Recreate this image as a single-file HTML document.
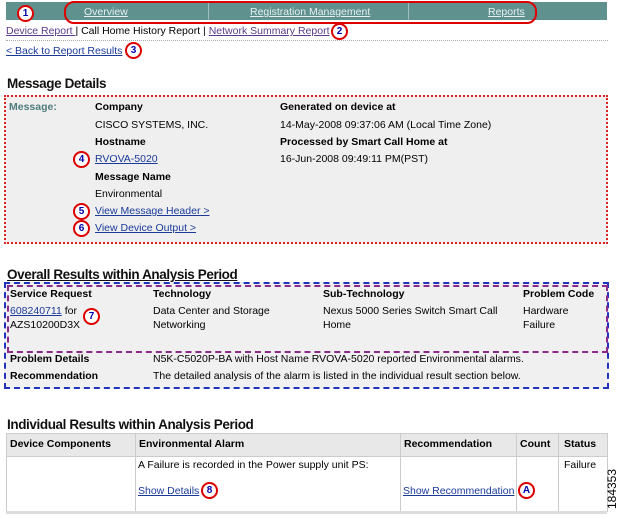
<!DOCTYPE html>
<html><head><style>
body{margin:0;width:625px;height:519px;background:#fff;font-family:"Liberation Sans",sans-serif;font-size:10.5px;color:#000;position:relative;overflow:hidden}
.a{position:absolute;white-space:nowrap}
a,.l{color:#1a3a9a;text-decoration:underline}
.v{color:#5a3a8a}
.b{font-weight:bold}
.c{position:absolute;width:13px;height:13px;border:2px solid #d00;border-radius:50%;color:#00a;font-size:10px;font-weight:bold;text-align:center;line-height:13px;background:#fff}
h2{position:absolute;margin:0;font-size:13.5px;font-weight:bold;color:#111;letter-spacing:-0.4px}
</style></head><body>
<div class="a" style="left:6px;top:2px;width:601px;height:18px;background:#5f918f"></div>
<div class="a" style="left:208px;top:2px;width:1px;height:18px;background:#9fbfbe"></div>
<div class="a" style="left:408px;top:2px;width:1px;height:18px;background:#9fbfbe"></div>
<div class="a" style="left:64px;top:1px;width:469px;height:19px;border:2px solid #d00;border-radius:10px"></div>
<div class="a" style="left:84px;top:6px;color:#e8f0f0;text-decoration:underline">Overview</div>
<div class="a" style="left:250px;top:6px;color:#e8f0f0;text-decoration:underline">Registration Management</div>
<div class="a" style="left:488px;top:6px;color:#e8f0f0;text-decoration:underline">Reports</div>
<div class="c" style="left:17px;top:5px">1</div>
<div class="a" style="left:6px;top:25px"><span class="l v">Device Report </span>| Call Home History Report | <span class="l v">Network Summary Report</span></div>
<div class="c" style="left:331px;top:23px">2</div>
<div class="a" style="left:6px;top:40px;width:602px;border-top:1px dotted #aaa"></div>
<div class="a l" style="left:6px;top:45px">&lt; Back to Report Results</div>
<div class="c" style="left:125px;top:42px">3</div>
<h2 style="left:7px;top:76px">Message Details</h2>
<div class="a" style="left:4px;top:95px;width:600px;height:145px;background:#efefef;border:2px dotted #d22"></div>
<div class="a b" style="left:9px;top:101px;color:#4f7d7c">Message:</div>
<div class="a b" style="left:95px;top:101px">Company</div>
<div class="a b" style="left:280px;top:101px">Generated on device at</div>
<div class="a" style="left:95px;top:119px">CISCO SYSTEMS, INC.</div>
<div class="a" style="left:280px;top:119px">14-May-2008 09:37:06 AM (Local Time Zone)</div>
<div class="a b" style="left:95px;top:136px">Hostname</div>
<div class="a b" style="left:280px;top:136px">Processed by Smart Call Home at</div>
<div class="a l" style="left:95px;top:153px">RVOVA-5020</div>
<div class="a" style="left:280px;top:153px">16-Jun-2008 09:49:11 PM(PST)</div>
<div class="c" style="left:73px;top:151px">4</div>
<div class="a b" style="left:95px;top:171px">Message Name</div>
<div class="a" style="left:95px;top:188px">Environmental</div>
<div class="a l" style="left:95px;top:205px">View Message Header &gt;</div>
<div class="c" style="left:73px;top:203px">5</div>
<div class="a l" style="left:95px;top:222px">View Device Output &gt;</div>
<div class="c" style="left:73px;top:220px">6</div>
<h2 style="left:7px;top:267px;text-decoration:underline">Overall Results within Analysis Period</h2>
<div class="a" style="left:4px;top:282px;width:601px;height:103px;background:#f0f0f0;border:2px dashed #2233bb"></div>
<div class="a" style="left:7px;top:285px;width:597px;height:64px;border:2px dashed #8a2a8a"></div>
<div class="a b" style="left:10px;top:288px">Service Request</div>
<div class="a b" style="left:153px;top:288px">Technology</div>
<div class="a b" style="left:323px;top:288px">Sub-Technology</div>
<div class="a b" style="left:523px;top:288px">Problem Code</div>
<div class="a" style="left:10px;top:305px"><span class="l">608240711</span> for</div>
<div class="a" style="left:10px;top:319px">AZS10200D3X</div>
<div class="c" style="left:83px;top:308px">7</div>
<div class="a" style="left:153px;top:305px">Data Center and Storage</div>
<div class="a" style="left:153px;top:319px">Networking</div>
<div class="a" style="left:323px;top:305px">Nexus 5000 Series Switch Smart Call</div>
<div class="a" style="left:323px;top:319px">Home</div>
<div class="a" style="left:523px;top:305px">Hardware</div>
<div class="a" style="left:523px;top:319px">Failure</div>
<div class="a b" style="left:10px;top:353px">Problem Details</div>
<div class="a" style="left:153px;top:353px">N5K-C5020P-BA with Host Name RVOVA-5020 reported Environmental alarms.</div>
<div class="a b" style="left:10px;top:370px">Recommendation</div>
<div class="a" style="left:153px;top:370px">The detailed analysis of the alarm is listed in the individual result section below.</div>
<h2 style="left:7px;top:417px">Individual Results within Analysis Period</h2>
<div class="a" style="left:6px;top:433px;width:600px;height:22px;background:#e8e8e8;border:1px solid #ccc"></div>
<div class="a" style="left:6px;top:455px;width:600px;height:56px;border:1px solid #ccc;border-top:none"></div>
<div class="a" style="left:6px;top:511px;width:601px;height:3px;background:#ddd"></div>
<div class="a" style="left:135px;top:433px;width:1px;height:78px;background:#ccc"></div>
<div class="a" style="left:400px;top:433px;width:1px;height:78px;background:#ccc"></div>
<div class="a" style="left:516px;top:433px;width:1px;height:78px;background:#ccc"></div>
<div class="a" style="left:558px;top:433px;width:1px;height:78px;background:#ccc"></div>
<div class="a b" style="left:10px;top:438px">Device Components</div>
<div class="a b" style="left:139px;top:438px">Environmental Alarm</div>
<div class="a b" style="left:404px;top:438px">Recommendation</div>
<div class="a b" style="left:520px;top:438px">Count</div>
<div class="a b" style="left:564px;top:438px">Status</div>
<div class="a" style="left:138px;top:459px">A Failure is recorded in the Power supply unit PS:</div>
<div class="a" style="left:564px;top:459px">Failure</div>
<div class="a l" style="left:138px;top:485px">Show Details</div>
<div class="c" style="left:201px;top:482px">8</div>
<div class="a l" style="left:403px;top:485px">Show Recommendation</div>
<div class="c" style="left:518px;top:482px">A</div>
<div class="a" style="left:592px;top:482px;transform:rotate(-90deg);font-size:12px">184353</div>
</body></html>
